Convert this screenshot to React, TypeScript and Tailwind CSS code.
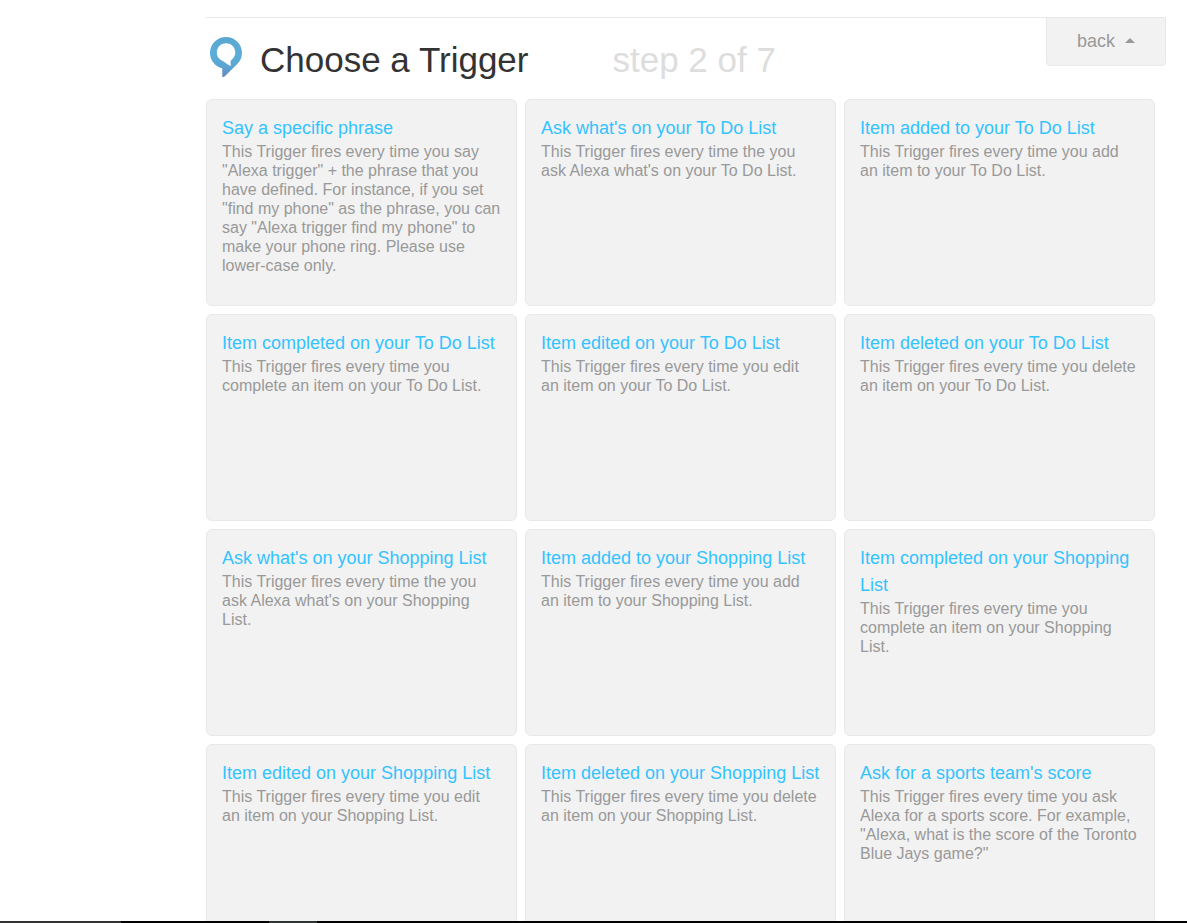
const triggers = [
  {
    title: "Say a specific phrase",
    text: 'This Trigger fires every time you say "Alexa trigger" + the phrase that you have defined. For instance, if you set "find my phone" as the phrase, you can say "Alexa trigger find my phone" to make your phone ring. Please use lower-case only.',
  },
  {
    title: "Ask what's on your To Do List",
    text: "This Trigger fires every time the you ask Alexa what's on your To Do List.",
  },
  {
    title: "Item added to your To Do List",
    text: "This Trigger fires every time you add an item to your To Do List.",
  },
  {
    title: "Item completed on your To Do List",
    text: "This Trigger fires every time you complete an item on your To Do List.",
  },
  {
    title: "Item edited on your To Do List",
    text: "This Trigger fires every time you edit an item on your To Do List.",
  },
  {
    title: "Item deleted on your To Do List",
    text: "This Trigger fires every time you delete an item on your To Do List.",
  },
  {
    title: "Ask what's on your Shopping List",
    text: "This Trigger fires every time the you ask Alexa what's on your Shopping List.",
  },
  {
    title: "Item added to your Shopping List",
    text: "This Trigger fires every time you add an item to your Shopping List.",
  },
  {
    title: "Item completed on your Shopping List",
    text: "This Trigger fires every time you complete an item on your Shopping List.",
  },
  {
    title: "Item edited on your Shopping List",
    text: "This Trigger fires every time you edit an item on your Shopping List.",
  },
  {
    title: "Item deleted on your Shopping List",
    text: "This Trigger fires every time you delete an item on your Shopping List.",
  },
  {
    title: "Ask for a sports team's score",
    text: 'This Trigger fires every time you ask Alexa for a sports score. For example, "Alexa, what is the score of the Toronto Blue Jays game?"',
  },
];

function AlexaLogo() {
  return (
    <svg viewBox="0 0 32 40" className="h-10 w-8 shrink-0" aria-hidden="true">
      <defs>
        <linearGradient id="alexa" x1="0" y1="0" x2="0" y2="1">
          <stop offset="0" stopColor="#5ba6d3" />
          <stop offset="0.45" stopColor="#5aaed8" />
          <stop offset="0.75" stopColor="#5ba3d2" />
          <stop offset="1" stopColor="#6389c0" />
        </linearGradient>
      </defs>
      <path
        fill="url(#alexa)"
        fillRule="evenodd"
        d="M16 0C7 0 0 7 0 16c0 7.600 5.200 13.600 12.300 15.300V40c1.200.1 2-.3 2.800-1.100L26.800 27.500C30.200 24.400 32 20.500 32 16 32 7 25 0 16 0ZM16 6.200c5.300 0 9.300 4.100 9.300 9.300 0 3.200-1.400 5.300-3.600 7.200-1 .9-1.200 1.600-1.100 2.700l.3 3.300c-1.300-.1-2.300-.7-3.400-1.500l-3.900-2.800C9.600 22.900 6.800 20 6.800 15.500c0-5.200 4-9.300 9.200-9.300Z"
      />
    </svg>
  );
}

function BackButton() {
  return (
    <button
      type="button"
      className="flex h-[49px] w-30 items-center justify-center gap-2.5 rounded-b border border-[#e8e8e8] bg-[#f2f2f2] pb-0.5 text-lg text-[#999]"
    >
      back
      <svg viewBox="0 0 10 5" className="h-[5px] w-2.5" aria-hidden="true">
        <path d="M5 0 10 5H0Z" fill="#999" />
      </svg>
    </button>
  );
}

export default function App() {
  return (
    <div className="flex h-screen flex-col bg-white font-['Liberation_Sans',Arial,sans-serif]">
      <main className="min-h-0 grow overflow-hidden pt-[17px] pr-[21px] pl-[206px]">
        <header className="flex items-start justify-between">
          <div className="flex h-[82px] grow items-center border-t border-[#e8e8e8] pb-1 pl-1">
            <AlexaLogo />
            <h1 className="ml-[18px] pt-1.5 text-[35px] leading-10 text-[#333]">Choose a Trigger</h1>
            <p className="ml-[84px] pt-1.5 text-[35px] leading-10 text-[#ddd]">step 2 of 7</p>
          </div>
          <BackButton />
        </header>
        <ul className="grid grid-cols-3 gap-2 pr-[11px]">
          {triggers.map((trigger) => (
            <li
              key={trigger.title}
              className="h-[207px] rounded-md border border-[#e8e8e8] bg-[#f2f2f2] p-[15px]"
            >
              <h2 className="text-lg leading-[27px] text-[#33c3ff]">
                <a href="#">{trigger.title}</a>
              </h2>
              <p className="text-base leading-[19px] text-[#999]">{trigger.text}</p>
            </li>
          ))}
        </ul>
      </main>
      <footer className="flex h-0.5 shrink-0 bg-black">
        <div className="w-[121px] bg-[#333]" />
        <div className="ml-[148px] w-12 bg-[#303534]" />
      </footer>
    </div>
  );
}
